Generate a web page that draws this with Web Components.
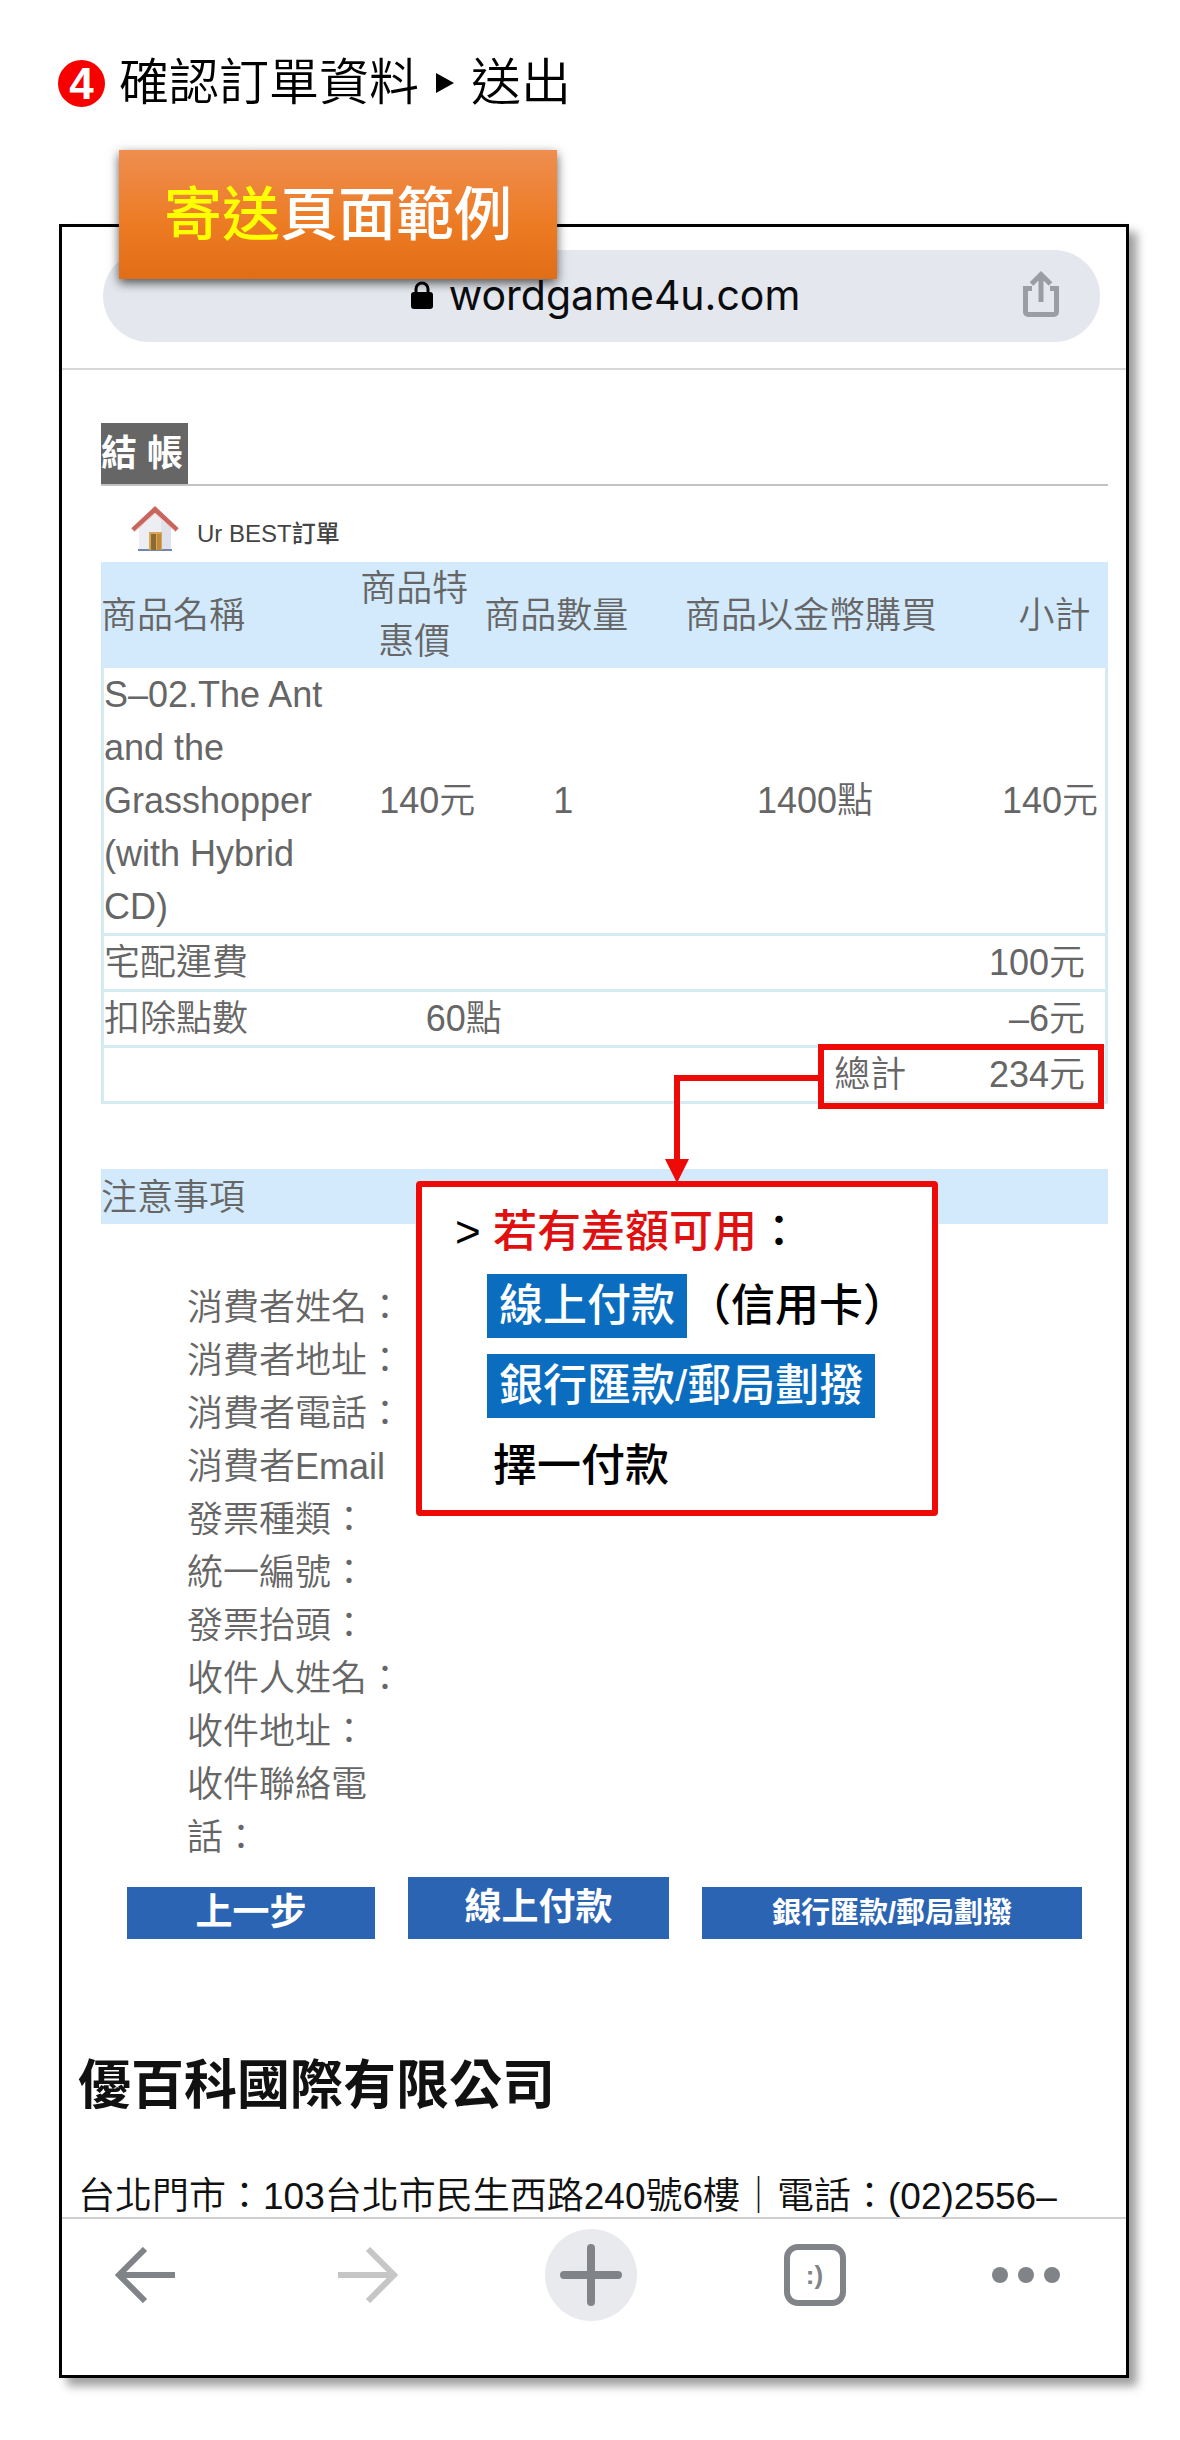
<!DOCTYPE html>
<html lang="zh-Hant">
<head>
<meta charset="utf-8">
<title>確認訂單資料</title>
<style>
    body {
        margin: 0;
        background: #fff;
        color: #666;
        font-family: "Liberation Sans", "Noto Sans CJK TC", sans-serif;
        font-size: 36px;
        font-weight: 350;
        line-height: 53px;
    }
</style>
</head>
<body>
<guide-step number="4">確認訂單資料<span slot="next">送出</span></guide-step>
<phone-frame>
    <page-tag slot="tag"><b>寄送</b>頁面範例</page-tag>
    <address-bar host="wordgame4u.com"></address-bar>
    <checkout-page></checkout-page>
    <company-info name="優百科國際有限公司">台北門市：103台北市民生西路240號6樓｜電話：(02)2556–</company-info>
    <browser-toolbar></browser-toolbar>
</phone-frame>

<script>
const attach = (element, html) => {
    const template = document.createElement('template')
    template.innerHTML = html
    element.attachShadow({ mode: 'open' })
    element.shadowRoot.appendChild(template.content.cloneNode(true))
    return element.shadowRoot
}

class GuideStep extends HTMLElement {
    constructor () {
        super()
        const root = attach(this, `
            <style>
                :host {
                    display: block;
                    padding: 53px 58px 0;
                    color: #000;
                }
                h1 {
                    display: flex;
                    align-items: center;
                    margin: 0;
                    font-size: 50px;
                    font-weight: 350;
                    line-height: 60px;
                }
                .number {
                    width: 47px;
                    height: 47px;
                    margin-right: 14px;
                    border-radius: 50%;
                    background: #f60000;
                    color: #fff;
                    font-size: 44px;
                    font-weight: bold;
                    line-height: 48px;
                    text-align: center;
                }
                .arrow {
                    width: 18px;
                    height: 20px;
                    margin: 0 17px;
                }
            </style>
            <h1>
                <span class="number"></span>
                <span><slot></slot></span>
                <svg class="arrow" viewBox="0 0 18 20" aria-hidden="true"><path d="M0 0 18 10 0 20z"/></svg>
                <slot name="next"></slot>
            </h1>
        `)
        this.$number = root.querySelector('.number')
    }

    connectedCallback () {
        this.$number.textContent = this.getAttribute('number')
    }
}
customElements.define('guide-step', GuideStep)

class PhoneFrame extends HTMLElement {
    constructor () {
        super()
        attach(this, `
            <style>
                :host {
                    display: block;
                    position: relative;
                    margin: 111px 51px 62px 59px;
                    border: 3px solid #000;
                    background: #fff;
                    box-shadow: 8px 8px 9px rgba(0, 0, 0, 0.38);
                }
                /* the tag hangs over the top edge of the frame */
                slot[name="tag"] {
                    display: block;
                    position: absolute;
                    top: -77px;
                    left: 57px;
                    z-index: 1;
                }
            </style>
            <slot name="tag"></slot>
            <slot></slot>
        `)
    }
}
customElements.define('phone-frame', PhoneFrame)

class PageTag extends HTMLElement {
    constructor () {
        super()
        attach(this, `
            <style>
                :host {
                    display: block;
                    padding: 29px 45px 28px;
                    background: linear-gradient(#ef8e50, #ec7a22 60%, #e16e16);
                    box-shadow: 0 4px 10px rgba(0, 0, 0, 0.65);
                    color: #fff;
                    font-size: 58px;
                    font-weight: 500;
                    line-height: 72px;
                }
                ::slotted(b) {
                    color: #ff0;
                    font-weight: 500;
                }
            </style>
            <slot></slot>
        `)
    }
}
customElements.define('page-tag', PageTag)

class AddressBar extends HTMLElement {
    constructor () {
        super()
        const root = attach(this, `
            <style>
                :host {
                    display: block;
                    padding: 23px 26px 26px 41px;
                    border-bottom: 2px solid #d8d8da;
                }
                .bar {
                    display: grid;
                    grid-template-columns: 1fr auto 1fr;
                    align-items: center;
                    height: 92px;
                    padding-left: 8px;
                    border-radius: 46px;
                    background: #e4e7ed;
                }
                a {
                    grid-column: 2;
                    display: flex;
                    align-items: center;
                    gap: 16px;
                    padding-bottom: 2px;
                    color: #0b0c0f;
                    font-family: Inter, sans-serif;
                    font-size: 41px;
                    font-weight: 400;
                    text-decoration: none;
                }
                button {
                    justify-self: end;
                    margin-right: 40px;
                    padding: 0 0 4px;
                    border: 0;
                    background: none;
                    line-height: 0;
                }
            </style>
            <div class="bar">
                <a href="#">
                    <svg width="22" height="28" viewBox="0 0 22 28" aria-hidden="true">
                        <rect y="11" width="22" height="17" rx="3"/>
                        <path d="M5 13V8a6 6 0 0 1 12 0v5" fill="none" stroke="#000" stroke-width="3"/>
                    </svg>
                    <span class="host"></span>
                </a>
                <button type="button" aria-label="分享">
                    <svg width="38" height="48" viewBox="0 0 38 48" fill="none" stroke="#9a9ea3" stroke-width="5">
                        <path d="M10 18.500H3.500V42a2.500 2.500 0 0 0 2.500 2.500h26a2.500 2.500 0 0 0 2.500-2.500V18.500H28"/>
                        <path d="M19 32V4M9.500 14 19 4.500 28.500 14"/>
                    </svg>
                </button>
            </div>
        `)
        this.$host = root.querySelector('.host')
    }

    connectedCallback () {
        this.$host.textContent = this.getAttribute('host')
    }
}
customElements.define('address-bar', AddressBar)

class CheckoutPage extends HTMLElement {
    constructor () {
        super()
        attach(this, `
            <style>
                :host {
                    display: block;
                    padding: 53px 18px 0 39px;
                }
                .heading {
                    display: flex;
                    border-bottom: 2px solid #c2c2c2;
                }
                h2 {
                    margin: 0;
                    padding: 4px 5px 4px 0;
                    background: #666;
                    color: #fff;
                    font-size: 36px;
                    font-weight: bold;
                    line-height: 53px;
                }
                .order-name {
                    display: flex;
                    align-items: center;
                    gap: 18px;
                    box-sizing: border-box;
                    height: 76px;
                    padding: 10px 30px 0;
                    color: #444;
                    font-size: 24px;
                    font-weight: 500;
                }
                .order-name span {
                    padding-top: 8px;
                }
                .order {
                    position: relative;
                }
                .notice {
                    margin: 65px 0 57px;
                    padding-top: 2px;
                    background: #d2eafc;
                    font-size: 36px;
                    font-weight: 350;
                    line-height: 53px;
                }
            </style>
            <div class="heading"><h2>結 帳</h2></div>
            <div class="order-name">
                <svg width="48" height="46" viewBox="0 0 48 46" aria-hidden="true">
                    <path d="M8 20 24 6 40 20v24H8z" fill="#eceef3"/>
                    <path d="M30 14 40 22v22h-9z" fill="#dfe2ea"/>
                    <path d="M7 43h34v2H7z" fill="#7089a8"/>
                    <path d="M18 26h13v18H18z" fill="#d7a659"/>
                    <path d="M20 28h5v16h-5z" fill="#8c6a34"/>
                    <path d="M26 28h4v16h-4z" fill="#c08a3e"/>
                    <path d="M2 24 24 3.500 46 24" fill="none" stroke="#c9655f" stroke-width="5"/>
                    <path d="M4 25 24 7 44 25" fill="none" stroke="#efc4bd" stroke-width="1"/>
                </svg>
                <span>Ur BEST訂單</span>
            </div>
            <div class="order">
                <order-table></order-table>
                <total-callout>
                    <span slot="title">若有差額可用</span>
                    <span slot="online">線上付款</span>
                    <span slot="note">（信用卡）</span>
                    <span slot="bank">銀行匯款/郵局劃撥</span>
                    <span slot="choose">擇一付款</span>
                </total-callout>
            </div>
            <h3 class="notice">注意事項</h3>
            <consumer-fields></consumer-fields>
            <order-actions></order-actions>
        `)
    }
}
customElements.define('checkout-page', CheckoutPage)

class OrderTable extends HTMLElement {
    constructor () {
        super()
        attach(this, `
            <style>
                :host {
                    display: block;
                }
                table {
                    width: 100%;
                    table-layout: fixed;
                    border-spacing: 0;
                    font-size: 36px;
                    line-height: 53px;
                    text-align: center;
                }
                th, td {
                    height: 53px;
                    padding: 0;
                    font-weight: 350;
                }
                th {
                    background: #d2eafc;
                }
                td {
                    border-bottom: 3px solid #d6eaf2;
                }
                th:first-child, td:first-child {
                    text-align: left;
                }
                td:first-child {
                    border-left: 3px solid #d6eaf2;
                }
                th:last-child {
                    padding-left: 14px;
                }
                td:last-child {
                    padding-left: 8px;
                    border-right: 3px solid #d6eaf2;
                    white-space: nowrap;
                }
                .price {
                    padding-right: 8px;
                }
                .count {
                    padding-right: 6px;
                    white-space: nowrap;
                }
                .item td:nth-child(2) {
                    padding-left: 18px;
                }
                .item td:nth-child(3) {
                    padding-left: 8px;
                }
                .item td:nth-child(4) {
                    padding-left: 8px;
                }
                .points {
                    padding-right: 60px;
                }
                .total {
                    padding-right: 81px;
                    text-align: right;
                }
                td.sum {
                    padding-left: 0;
                    padding-right: 20px;
                    text-align: right;
                }
            </style>
            <table>
                <colgroup>
                    <col style="width: 25%"><col style="width: 13%"><col style="width: 15%">
                    <col style="width: 35%"><col style="width: 12%">
                </colgroup>
                <thead>
                    <tr>
                        <th>商品名稱</th>
                        <th class="price">商品特惠價</th>
                        <th class="count">商品數量</th>
                        <th>商品以金幣購買</th>
                        <th>小計</th>
                    </tr>
                </thead>
                <tbody>
                    <tr class="item">
                        <td>S–02.The Ant and the Grasshopper (with Hybrid CD)</td>
                        <td>140元</td>
                        <td>1</td>
                        <td>1400點</td>
                        <td>140元</td>
                    </tr>
                    <tr><td colspan="4">宅配運費</td><td class="sum">100元</td></tr>
                    <tr><td>扣除點數</td><td class="points" colspan="2">60點</td><td></td><td class="sum">–6元</td></tr>
                    <tr><td colspan="3"></td><td class="total">總計</td><td class="sum">234元</td></tr>
                </tbody>
            </table>
        `)
    }
}
customElements.define('order-table', OrderTable)

/* red marker round the total, with an arrow down to the payment note */
class TotalCallout extends HTMLElement {
    constructor () {
        super()
        attach(this, `
            <style>
                :host {
                    --red: #ee0a06;
                    display: block;
                    position: absolute;
                    top: 100%;
                    right: 0;
                    color: #000;
                    font-size: 44px;
                    line-height: 64px;
                    font-weight: 500;
                    white-space: nowrap;
                }
                .mark {
                    position: absolute;
                    right: 4px;
                    bottom: -5px;
                    box-sizing: border-box;
                    width: 286px;
                    height: 65px;
                    border: 6px solid var(--red);
                }
                svg {
                    position: absolute;
                    right: 290px;
                    top: -29px;
                }
                .note {
                    position: absolute;
                    top: 77px;
                    right: 170px;
                    box-sizing: border-box;
                    width: 522px;
                    padding: 13px 0 12px 65px;
                    border: 6px solid var(--red);
                    border-radius: 4px;
                    background: #fff;
                }
                .title {
                    margin-left: -32px;
                }
                .title slot {
                    color: #e01010;
                }
                .line {
                    display: flex;
                    margin-top: 10px;
                }
                .line + .line {
                    margin-top: 16px;
                }
                mark {
                    padding: 0 12px;
                    background: #0a6dc0;
                    color: #fff;
                }
                .choose {
                    margin-top: 16px;
                    padding-left: 6px;
                }
            </style>
            <div class="mark"></div>
            <svg width="154" height="108" viewBox="0 0 154 108" aria-hidden="true">
                <path d="M154 3H13V90" fill="none" stroke="#ee0a06" stroke-width="6"/>
                <path d="M1 84H25L13 108z" fill="#ee0a06"/>
            </svg>
            <div class="note">
                <div class="title">&gt; <slot name="title"></slot>：</div>
                <div class="line"><mark><slot name="online"></slot></mark><slot name="note"></slot></div>
                <div class="line"><mark><slot name="bank"></slot></mark></div>
                <div class="choose"><slot name="choose"></slot></div>
            </div>
        `)
    }
}
customElements.define('total-callout', TotalCallout)

class ConsumerFields extends HTMLElement {
    constructor () {
        super()
        const root = attach(this, `
            <style>
                :host {
                    display: block;
                }
                ul {
                    width: 230px;
                    margin: 0;
                    padding: 0 0 0 86px;
                    list-style: none;
                }
            </style>
            <ul></ul>
        `)
        this.$list = root.querySelector('ul')
        this.fields = ['消費者姓名：', '消費者地址：', '消費者電話：', '消費者Email', '發票種類：', '統一編號：',
            '發票抬頭：', '收件人姓名：', '收件地址：', '收件聯絡電話：']
    }

    connectedCallback () {
        for (let i = 0; i < this.fields.length; i += 1) {
            const item = document.createElement('li')
            item.textContent = this.fields[i]
            this.$list.appendChild(item)
        }
    }
}
customElements.define('consumer-fields', ConsumerFields)

class OrderActions extends HTMLElement {
    constructor () {
        super()
        attach(this, `
            <style>
                :host {
                    display: flex;
                    align-items: flex-end;
                    gap: 33px;
                    padding: 13px 26px 0;
                }
                button {
                    flex: 248 1 0;
                    height: 52px;
                    padding: 0;
                    border: 0;
                    background: #2b64b3;
                    color: #fff;
                    font: bold 37px/50px "Liberation Sans", "Noto Sans CJK TC", sans-serif;
                    white-space: nowrap;
                }
                .online {
                    flex-grow: 261;
                    height: 62px;
                }
                .bank {
                    flex-grow: 380;
                    font-size: 29px;
                }
            </style>
            <button type="button">上一步</button>
            <button type="button" class="online">線上付款</button>
            <button type="button" class="bank">銀行匯款/郵局劃撥</button>
        `)
    }
}
customElements.define('order-actions', OrderActions)

class CompanyInfo extends HTMLElement {
    constructor () {
        super()
        const root = attach(this, `
            <style>
                :host {
                    display: block;
                    padding: 115px 16px 0;
                    color: #111;
                }
                h2 {
                    margin: 0 0 59px;
                    font-size: 53px;
                    font-weight: bold;
                    line-height: 64px;
                }
                p {
                    margin: 0;
                    font-size: 37px;
                    line-height: 40px;
                    white-space: nowrap;
                }
            </style>
            <h2></h2>
            <p><slot></slot></p>
        `)
        this.$name = root.querySelector('h2')
    }

    connectedCallback () {
        this.$name.textContent = this.getAttribute('name')
    }
}
customElements.define('company-info', CompanyInfo)

class BrowserToolbar extends HTMLElement {
    constructor () {
        super()
        attach(this, `
            <style>
                :host {
                    display: flex;
                    align-items: center;
                    justify-content: space-between;
                    padding: 10px 66px 54px 52px;
                    border-top: 2px solid #cfcfcf;
                }
                button {
                    display: flex;
                    align-items: center;
                    justify-content: center;
                    box-sizing: border-box;
                    height: 62px;
                    padding: 0;
                    border: 0;
                    background: none;
                    color: #808488;
                }
                .back {
                    padding-right: 14px;
                }
                .add {
                    width: 92px;
                    height: 92px;
                    border-radius: 50%;
                    background: #e8eaee;
                }
                .tabs {
                    width: 62px;
                    border: 6px solid #808488;
                    border-radius: 14px;
                    font: bold 26px "Liberation Sans", sans-serif;
                }
            </style>
            <button type="button" class="back" aria-label="上一頁">
                <svg width="62" height="56" viewBox="0 0 62 56" fill="none" stroke="#808488" stroke-width="6">
                    <path d="M61 28H5M31 2 5 28 31 54"/>
                </svg>
            </button>
            <button type="button" aria-label="下一頁">
                <svg width="62" height="56" viewBox="0 0 62 56" fill="none" stroke="#c6c6c6" stroke-width="6">
                    <path d="M1 28H57M31 2 57 28 31 54"/>
                </svg>
            </button>
            <button type="button" class="add" aria-label="新分頁">
                <svg width="62" height="62" viewBox="0 0 62 62" fill="none" stroke="#808488" stroke-width="8" stroke-linecap="round">
                    <path d="M4 31H58M31 4V58"/>
                </svg>
            </button>
            <button type="button" class="tabs">:)</button>
            <button type="button" aria-label="選單">
                <svg width="68" height="16" viewBox="0 0 68 16" fill="#808488">
                    <circle cx="8" cy="8" r="8"/><circle cx="34" cy="8" r="8"/><circle cx="60" cy="8" r="8"/>
                </svg>
            </button>
        `)
    }
}
customElements.define('browser-toolbar', BrowserToolbar)
</script>
</body>
</html>
